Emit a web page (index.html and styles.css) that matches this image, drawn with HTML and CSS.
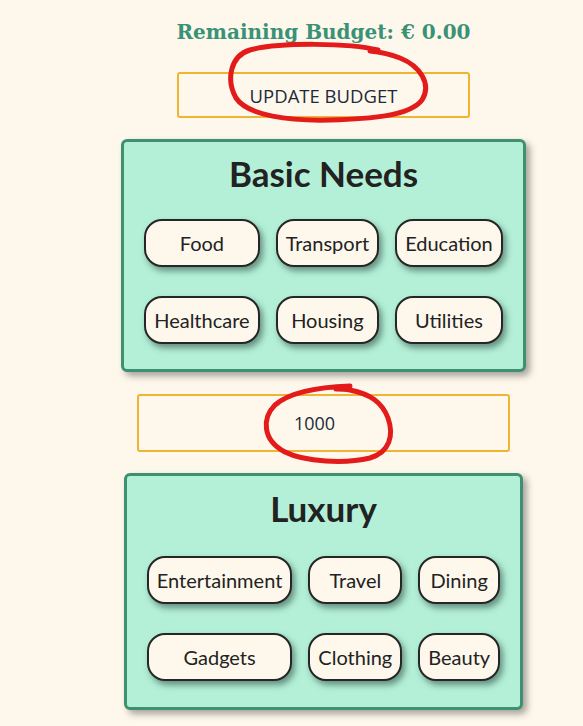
FILE: index.html
```html
<!DOCTYPE html>
<html lang="en">
<head>
<meta charset="utf-8">
<title>Budget</title>
<link rel="stylesheet" href="styles.css">
</head>
<body>
<main class="page">
  <h2 class="remaining">Remaining Budget: € 0.00</h2>
  <button class="update-btn" type="button">UPDATE BUDGET</button>

  <section class="card">
    <h1 class="card-title">Basic Needs</h1>
    <div class="chips">
      <div class="chip">Food</div>
      <div class="chip">Transport</div>
      <div class="chip">Education</div>
      <div class="chip">Healthcare</div>
      <div class="chip">Housing</div>
      <div class="chip">Utilities</div>
    </div>
  </section>

  <div class="amount-input">1000</div>

  <section class="card card-luxury">
    <h1 class="card-title">Luxury</h1>
    <div class="chips">
      <div class="chip">Entertainment</div>
      <div class="chip">Travel</div>
      <div class="chip">Dining</div>
      <div class="chip">Gadgets</div>
      <div class="chip">Clothing</div>
      <div class="chip">Beauty</div>
    </div>
  </section>

  <svg class="scribbles" width="583" height="726" viewBox="0 0 583 726" aria-hidden="true">
    <path d="M 378 50 C 350 43, 280 42, 250 50 C 230 56, 226 80, 236 98 C 248 116, 290 121, 330 120 C 370 119, 410 116, 422 100 C 432 84, 420 66, 400 58 C 390 54, 380 52, 370 51" />
    <path d="M 350 386 C 320 387, 290 392, 275 405 C 262 418, 262 440, 285 452 C 305 462, 345 464, 370 458 C 390 452, 394 435, 388 418 C 382 402, 370 394, 350 390 C 345 389, 340 389, 336 389" />
  </svg>
</main>
</body>
</html>
```

FILE: styles.css
```css
html, body {
  margin: 0;
  padding: 0;
  overflow: hidden;
}

body {
  background: #fef8ec;
  font-family: "Lato", "Open Sans", sans-serif;
  color: #222;
}

.page {
  position: relative;
  display: flex;
  flex-direction: column;
  align-items: center;
  padding-left: 64px;
  min-height: 726px;
  box-sizing: border-box;
}

.remaining {
  margin: 21px 0 0;
  font-family: "DejaVu Serif", serif;
  font-weight: bold;
  font-size: 20px;
  line-height: 23px;
  color: #3a9276;
}

.update-btn {
  margin-top: 28px;
  width: 293px;
  height: 46px;
  border: 2px solid #efb434;
  border-radius: 3px;
  background: transparent;
  font-family: "Open Sans", sans-serif;
  font-size: 18.5px;
  color: #1d2a38;
  padding: 0;
}

.card {
  margin-top: 21px;
  background: #b4f0d8;
  border: 3px solid #3e9070;
  border-radius: 6px;
  padding: 11px 20px 25px;
  box-shadow: 4px 4px 7px rgba(0, 0, 0, 0.35);
}

.card-title {
  margin: 0 0 25px;
  text-align: center;
  font-family: "Lato", sans-serif;
  font-weight: bold;
  font-size: 35px;
  line-height: 41px;
  color: #222;
}

.card-luxury {
  padding-top: 12px;
  padding-bottom: 26px;
}

.card-luxury .card-title {
  margin-bottom: 27px;
}

.chips {
  display: grid;
  grid-template-columns: repeat(3, auto);
  column-gap: 16px;
  row-gap: 29px;
}

.chip {
  padding: 10px 8px;
  border: 2px solid #262626;
  border-radius: 18px;
  background: #fef8ec;
  box-shadow: 3px 4px 6px rgba(20, 50, 40, 0.5);
  text-align: center;
  font-size: 20px;
  line-height: 24px;
  color: #222;
}

.amount-input {
  margin-top: 22px;
  width: 373px;
  height: 58px;
  box-sizing: border-box;
  border: 2px solid #efb434;
  border-radius: 3px;
  display: flex;
  align-items: center;
  justify-content: center;
  padding-right: 18px;
  font-family: "Open Sans", sans-serif;
  font-size: 18px;
  color: #1d2a38;
}

.scribbles {
  position: absolute;
  left: 0;
  top: 0;
  pointer-events: none;
}

.scribbles path {
  fill: none;
  stroke: #e31b1b;
  stroke-width: 5;
  stroke-linecap: round;
  stroke-linejoin: round;
}
```
